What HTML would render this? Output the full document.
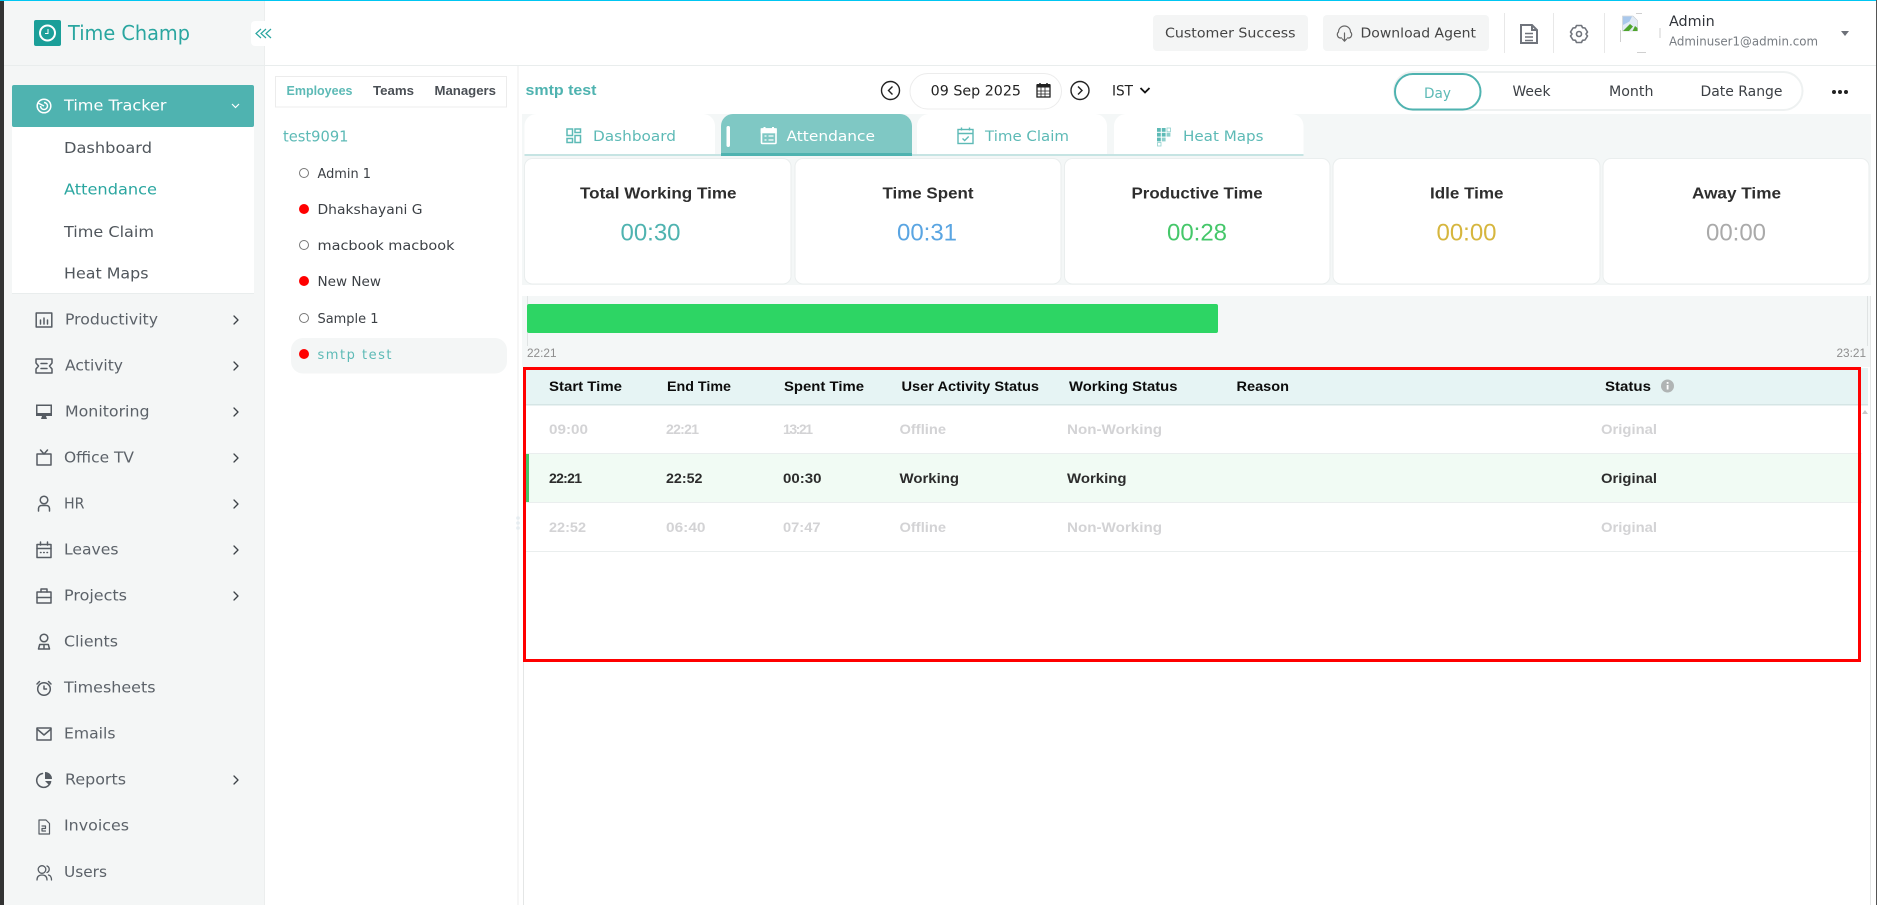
<!DOCTYPE html>
<html lang="en">
<head>
<meta charset="utf-8">
<title>Time Champ - Attendance</title>
<style>
html,body{margin:0;padding:0;background:#fff;width:1877px;height:905px;overflow:hidden}
svg{display:block}
text{font-family:"DejaVu Sans","Liberation Sans",sans-serif;font-size:14px;fill:#333}
.b{font-family:"Liberation Sans",sans-serif;font-weight:700}
.nav{font-size:15px;fill:#5c6269}
.sub{font-size:15px;fill:#50565c}
.emp{font-size:13px;fill:#3c4045}
.tb{font-size:13px;fill:#444}
.tab{font-size:14px;fill:#5dbab6}
.ttl{font-size:16px;fill:#2e2e2e}
.val{font-family:"Liberation Sans",sans-serif;font-size:24px;text-anchor:middle}
.th{font-size:13.5px;fill:#0c0c0c}
.td{font-size:13.5px;fill:#2c2c2c}
.off{font-size:13.5px;fill:#d3d3d5}
.ic{fill:none;stroke:#565c63;stroke-width:1.5;stroke-linecap:round;stroke-linejoin:round}
.ch{fill:none;stroke:#3d4248;stroke-width:1.3;stroke-linecap:round;stroke-linejoin:round}
</style>
</head>
<body>
<svg width="1877" height="905" viewBox="0 0 1877 905" xmlns="http://www.w3.org/2000/svg">
<rect width="1877" height="905" fill="#fff"/>

<!-- sidebar -->
<rect x="4" y="1" width="260" height="904" fill="#f4f6f6"/>
<rect x="264" y="1" width="1" height="904" fill="#eceeee"/>
<rect x="0" y="0" width="4" height="905" fill="#333"/>
<rect x="0" y="0" width="1877" height="1" fill="#00c6f2"/>
<rect x="1876" y="0" width="1" height="905" fill="#555"/>
<rect x="4" y="65" width="1872" height="1" fill="#e9eded"/>

<!-- logo -->
<rect x="34" y="20" width="27" height="26" rx="2" fill="#1b9f99"/>
<circle cx="47.500" cy="33" r="7.500" fill="none" stroke="#fff" stroke-width="2"/>
<path d="M48 29v4.500h-3" fill="none" stroke="#fff" stroke-width="1"/>
<text x="68" y="40" style="font-size:20px;fill:#2aa6a0" textLength="122" lengthAdjust="spacingAndGlyphs">Time Champ</text>

<!-- collapse -->
<rect x="251" y="21" width="25" height="25" rx="4" fill="#fff"/>
<path d="M261 29l-5 4.500 5 4.500M266 29l-5 4.500 5 4.500M271 29l-5 4.500 5 4.500" fill="none" stroke="#2aa6a0" stroke-width="1.200"/>

<!-- active nav -->
<rect x="12" y="85" width="242" height="42" rx="2" fill="#4fb3b0"/>
<g transform="translate(44,106)" fill="none" stroke="#fff" stroke-width="1.500">
<circle r="6.800"/><path d="M-3.500 0a3.500 3.500 0 1 0 3.500-3.500M-6-3l6 3"/>
</g>
<text x="64" y="110.500" style="font-size:15.500px;fill:#fff" textLength="102.500" lengthAdjust="spacingAndGlyphs">Time Tracker</text>
<path d="M232 104l3.500 3.500 3.500-3.500" fill="none" stroke="#fff" stroke-width="1.200"/>
<rect x="12" y="127" width="242" height="167" fill="#fff"/>
<rect x="12" y="293" width="242" height="1" fill="#e9eded"/>
<text class="sub" x="64" y="153" textLength="88" lengthAdjust="spacingAndGlyphs">Dashboard</text>
<text class="sub" x="64" y="194.500" style="fill:#2aa6a0" textLength="93" lengthAdjust="spacingAndGlyphs">Attendance</text>
<text class="sub" x="64" y="237" textLength="90" lengthAdjust="spacingAndGlyphs">Time Claim</text>
<text class="sub" x="64" y="278.500" textLength="84.500" lengthAdjust="spacingAndGlyphs">Heat Maps</text>

<!-- nav items -->
<g transform="translate(44,320)" class="ic"><rect x="-7.800" y="-7" width="15.600" height="14"/><path d="M-3.500 4V0M0 4v-6M3.500 4v-4"/></g>
<text class="nav" x="65" y="324.500" textLength="93" lengthAdjust="spacingAndGlyphs">Productivity</text>
<path class="ch" d="M234 316l4 4-4 4"/>

<g transform="translate(44,366)" class="ic"><path d="M-8-7h16v4l-2.500 3 2.500 3v4h-16v-4l2.500-3-2.500-3zM-3-2.500h6M-3 2.500h6"/></g>
<text class="nav" x="65" y="370.500" textLength="58" lengthAdjust="spacingAndGlyphs">Activity</text>
<path class="ch" d="M234 362l4 4-4 4"/>

<g transform="translate(44,412)"><rect x="-8" y="-7.500" width="16" height="11.500" fill="#565c63"/><rect x="-6.500" y="-6" width="13" height="7" fill="#f4f6f6"/><path d="M-2 4h4l1 3h-6z" fill="#565c63"/><rect x="-8" y="1" width="16" height="3" fill="#565c63"/></g>
<text class="nav" x="65" y="416.500" textLength="84.500" lengthAdjust="spacingAndGlyphs">Monitoring</text>
<path class="ch" d="M234 408l4 4-4 4"/>

<g transform="translate(44,458)" class="ic"><rect x="-7" y="-4" width="14" height="11"/><path d="M-3.500-8L0-4l3.500-4"/></g>
<text class="nav" x="64" y="462.500" textLength="70" lengthAdjust="spacingAndGlyphs">Office TV</text>
<path class="ch" d="M234 454l4 4-4 4"/>

<g transform="translate(44,504)" class="ic"><circle cy="-4" r="3.800"/><path d="M-5.500 7v-2.500a3 3 0 0 1 3-3h5a3 3 0 0 1 3 3V7"/></g>
<text class="nav" x="64" y="508.500" textLength="20.500" lengthAdjust="spacingAndGlyphs">HR</text>
<path class="ch" d="M234 500l4 4-4 4"/>

<g transform="translate(44,550)" class="ic"><rect x="-7" y="-5.500" width="14" height="13"/><path d="M-7-1.500H7M-3.500-8v3M3.500-8v3M-3.500 2.500h.5M-.3 2.500h.5M3 2.500h.5"/></g>
<text class="nav" x="64" y="554.500" textLength="54.500" lengthAdjust="spacingAndGlyphs">Leaves</text>
<path class="ch" d="M234 592l4 4-4 4"/>
<path class="ch" d="M234 546l4 4-4 4"/>

<g transform="translate(44,596)" class="ic"><rect x="-7" y="-4" width="14" height="11"/><path d="M-3-4v-3h6v3M-7 1.500H7M-1 1.500h2"/></g>
<text class="nav" x="64" y="600.500" textLength="63" lengthAdjust="spacingAndGlyphs">Projects</text>

<g transform="translate(44,642)" class="ic"><circle cy="-4" r="3.800"/><path d="M-5.500 7l1.200-4.500h8.600L5.500 7zM0 2.500V7"/></g>
<text class="nav" x="64" y="646.500" textLength="54" lengthAdjust="spacingAndGlyphs">Clients</text>

<g transform="translate(44,688)" class="ic"><circle cy="1" r="6.300"/><path d="M0-2v3h2.500M-7-4l2.500-2.500M7-4L4.500-6.500"/></g>
<text class="nav" x="64" y="692.500" textLength="91.500" lengthAdjust="spacingAndGlyphs">Timesheets</text>

<g transform="translate(44,734)" class="ic"><rect x="-7" y="-6" width="14" height="12"/><path d="M-7-5L0 1l7-6"/></g>
<text class="nav" x="64" y="738.500" textLength="51.500" lengthAdjust="spacingAndGlyphs">Emails</text>

<g transform="translate(44,780)"><path d="M-1.500-6.500A7 7 0 1 0 6.500 2" class="ic"/><path d="M1-8a7 7 0 0 1 7 7H1z" fill="#565c63"/><path d="M1 1h6.500L5 5z" fill="#565c63"/></g>
<text class="nav" x="65" y="784.500" textLength="61" lengthAdjust="spacingAndGlyphs">Reports</text>
<path class="ch" d="M234 776l4 4-4 4"/>

<g transform="translate(44,827)" class="ic" style="stroke-width:1.200"><path d="M-5-7h7l3.500 3.500V7h-10.500zM-2-1h3.500v2.500H-2V4h3.500"/></g>
<text class="nav" x="64" y="830.500" textLength="65" lengthAdjust="spacingAndGlyphs">Invoices</text>

<g transform="translate(44,873)" class="ic" style="stroke-width:1.300"><circle cx="-2" cy="-3.500" r="3.800"/><path d="M-7 7c0-3 1.500-5 5-5s5 2 5 5M3-7a3.500 3.500 0 0 1 0 6.500M4.500 2C6.500 2.500 7.500 4.500 7.500 7"/></g>
<text class="nav" x="64" y="877" textLength="43" lengthAdjust="spacingAndGlyphs">Users</text>

<!-- employee panel -->
<rect x="517.500" y="66" width="1" height="839" fill="#eceeee"/>
<rect x="275.500" y="76.500" width="231" height="30.500" fill="#fff" stroke="#ececec"/>
<text class="b" x="286.500" y="95" style="font-size:13px;fill:#5dbab6" textLength="66" lengthAdjust="spacingAndGlyphs">Employees</text>
<text class="b" x="373" y="95" style="font-size:13px;fill:#4a4f55" textLength="41" lengthAdjust="spacingAndGlyphs">Teams</text>
<text class="b" x="434.500" y="95" style="font-size:13px;fill:#4a4f55" textLength="61.500" lengthAdjust="spacingAndGlyphs">Managers</text>
<text x="283" y="141.500" style="font-size:15px;fill:#5dbab6" textLength="65.500" lengthAdjust="spacingAndGlyphs">test9091</text>

<rect x="291" y="338" width="216" height="35.500" rx="12" fill="#f4f6f6"/>
<circle cx="304" cy="173" r="4.500" fill="#fff" stroke="#777"/>
<text class="emp" x="317.500" y="178" textLength="53.500" lengthAdjust="spacingAndGlyphs">Admin 1</text>
<circle cx="304" cy="209" r="5" fill="#f00"/>
<text class="emp" x="317.500" y="214" textLength="105" lengthAdjust="spacingAndGlyphs">Dhakshayani G</text>
<circle cx="304" cy="245" r="4.500" fill="#fff" stroke="#777"/>
<text class="emp" x="317.500" y="250" textLength="137" lengthAdjust="spacingAndGlyphs">macbook macbook</text>
<circle cx="304" cy="281" r="5" fill="#f00"/>
<text class="emp" x="317.500" y="286" textLength="63.500" lengthAdjust="spacingAndGlyphs">New New</text>
<circle cx="304" cy="318" r="4.500" fill="#fff" stroke="#777"/>
<text class="emp" x="317.500" y="323" textLength="61" lengthAdjust="spacingAndGlyphs">Sample 1</text>
<circle cx="304" cy="354" r="5" fill="#f00"/>
<text class="emp" x="317.500" y="359" style="fill:#5dbab6" textLength="74" lengthAdjust="spacing">smtp test</text>
<g fill="#e6ecf0"><circle cx="518" cy="518" r="1.800"/><circle cx="518" cy="523" r="1.800"/><circle cx="518" cy="528" r="1.800"/></g>

<!-- top bar -->
<rect x="1153" y="15" width="155" height="36" rx="4" fill="#f4f5f5"/>
<text class="tb" x="1165" y="37.500" textLength="130.500" lengthAdjust="spacingAndGlyphs">Customer Success</text>
<rect x="1323" y="15" width="166" height="36" rx="4" fill="#f4f5f5"/>
<g transform="translate(1344.500,33)" fill="none" stroke="#666" stroke-width="1.200" stroke-linecap="round" stroke-linejoin="round"><path d="M-3 5h-1.500A3.500 3.500 0 0 1-6 -1a6 6 0 0 1 12 0A3.500 3.500 0 0 1 4.500 5H3M0 0v8M-2 6l2 2.200L2 6"/></g>
<text class="tb" x="1360.500" y="37.500" textLength="115.500" lengthAdjust="spacingAndGlyphs">Download Agent</text>
<rect x="1504" y="13" width="1" height="40" fill="#e8e8e8"/>
<rect x="1553" y="13" width="1" height="40" fill="#e8e8e8"/>
<rect x="1604" y="13" width="1" height="40" fill="#e8e8e8"/>
<g fill="none" stroke="#70747c" stroke-width="2"><path d="M1521 25h11l5 5v13h-16zM1532 25v5h5"/><path d="M1525 33.500h8M1525 37h8M1525 40.500h8" stroke-width="1.600"/></g>
<g transform="translate(1579,34)" fill="none" stroke="#70747c" stroke-width="1.600" stroke-linejoin="round"><path d="M-2.500-8.500h5l1 2.200 2.500.3 2.500 4-1.500 2 1.500 2-2.500 4-2.500.3-1 2.200h-5l-1-2.200-2.500-.3-2.500-4 1.500-2-1.500-2 2.500-4 2.500-.3z"/><circle r="2.500"/></g>

<!-- avatar -->
<g fill="none" stroke="#d0d0d0"><path d="M1636 13.500h6"/><path d="M1660 28v10"/><path d="M1637 52.500h9"/><path d="M1620.500 30v12"/></g>
<path d="M1622.500 16h10.500l4.500 4.500V31h-15z" fill="#e2ebf6" stroke="#c4c8cc" stroke-width=".6"/>
<path d="M1623 16.500h9l-2.500 5-6.500 3.500z" fill="#a9c8ec"/>
<path d="M1623 31l7-7 3 2.500L1629 31z" fill="#4fa52d"/>
<path d="M1635 26l2.500 2v3h-5z" fill="#4fa52d"/>
<text x="1669" y="26" style="font-size:14px;fill:#30343a" textLength="45.700" lengthAdjust="spacingAndGlyphs">Admin</text>
<text x="1669" y="45.500" style="font-size:12.500px;fill:#777c82" textLength="149" lengthAdjust="spacingAndGlyphs">Adminuser1@admin.com</text>
<path d="M1841 31h8l-4 5z" fill="#6d7178"/>

<!-- context row -->
<text class="b" x="525.500" y="95" style="font-size:14.500px;fill:#4fb3b0" textLength="71" lengthAdjust="spacingAndGlyphs">smtp test</text>
<circle cx="890.500" cy="90.500" r="9" fill="#fff" stroke="#222" stroke-width="1.400"/>
<path d="M892.500 86.500l-4 4 4 4" fill="none" stroke="#222" stroke-width="1.400"/>
<rect x="910" y="73.500" width="151.500" height="35.500" rx="17.700" fill="#fff" stroke="#ececec"/>
<text x="930.700" y="95.500" style="font-size:14px;fill:#222" textLength="90.300" lengthAdjust="spacingAndGlyphs">09 Sep 2025</text>
<g><rect x="1037" y="85" width="13" height="12" fill="#fff" stroke="#222" stroke-width="1.300"/><rect x="1037" y="84" width="13" height="3.500" fill="#222"/><path d="M1040 83v3M1047 83v3" stroke="#222" stroke-width="1.500"/><path d="M1037 91h13M1037 94h13M1041 87v10M1045 87v10" stroke="#222" stroke-width=".8"/></g>
<circle cx="1080" cy="90.500" r="9" fill="#fff" stroke="#222" stroke-width="1.400"/>
<path d="M1078 86.500l4 4-4 4" fill="none" stroke="#222" stroke-width="1.400"/>
<text x="1112" y="95.500" style="font-size:14px;fill:#222" textLength="21" lengthAdjust="spacingAndGlyphs">IST</text>
<path d="M1140.500 88l4.500 4.500 4.500-4.500" fill="none" stroke="#111" stroke-width="1.800"/>

<!-- range toggle -->
<rect x="1394" y="72" width="408.500" height="38" rx="19" fill="#fff" stroke="#eef1f1" stroke-width="2"/>
<rect x="1395" y="74" width="85.500" height="35.500" rx="17.700" fill="#fff" stroke="#4fb3b0" stroke-width="2"/>
<text x="1424" y="98" style="font-size:14px;fill:#5dbab6" textLength="27" lengthAdjust="spacingAndGlyphs">Day</text>
<text x="1512.500" y="96" style="font-size:14px;fill:#3c4045" textLength="38" lengthAdjust="spacingAndGlyphs">Week</text>
<text x="1609" y="96" style="font-size:14px;fill:#3c4045" textLength="44.500" lengthAdjust="spacingAndGlyphs">Month</text>
<text x="1700.500" y="96" style="font-size:14px;fill:#3c4045" textLength="82" lengthAdjust="spacingAndGlyphs">Date Range</text>
<g fill="#222"><circle cx="1834" cy="92" r="2"/><circle cx="1840" cy="92" r="2"/><circle cx="1846" cy="92" r="2"/></g>

<!-- tab band -->
<rect x="522" y="114" width="1349" height="171" fill="#f4f7f7"/>
<path d="M524.500 155v-29a12 12 0 0 1 12-12H703a12 12 0 0 1 12 12v29z" fill="#fff"/>
<path d="M917 155v-29a12 12 0 0 1 12-12h166a12 12 0 0 1 12 12v29z" fill="#fff"/>
<path d="M1114 155v-29a12 12 0 0 1 12-12h165.500a12 12 0 0 1 12 12v29z" fill="#fff"/>
<rect x="524.500" y="154" width="197" height="2" fill="#c6e4e3"/>
<rect x="912" y="154" width="391.500" height="2" fill="#c6e4e3"/>
<path d="M721 156v-30a12 12 0 0 1 12-12h167a12 12 0 0 1 12 12v30z" fill="#7fc8c4"/>
<rect x="721" y="153" width="191" height="3" fill="#4fb3b0"/>
<rect x="726.500" y="126" width="3.500" height="21" rx="1.700" fill="#fff"/>

<g fill="none" stroke="#5dbab6" stroke-width="1.500"><rect x="567" y="129" width="5.500" height="6.500"/><rect x="575" y="129" width="5.500" height="3.500"/><rect x="567" y="138.500" width="5.500" height="4"/><rect x="575" y="135.500" width="5.500" height="7"/></g>
<text class="tab" x="593" y="141" textLength="83" lengthAdjust="spacingAndGlyphs">Dashboard</text>

<g fill="none" stroke="#fff" stroke-width="1.600"><rect x="761.500" y="129" width="14.500" height="14.500" rx="1"/><path d="M764.500 127v3M773 127v3" stroke-width="2"/><rect x="761.500" y="129" width="14.500" height="3.500" fill="#fff"/><path d="M764.500 136h2M768.500 136h5M764.500 140h2M768.500 140h5" stroke-width="1.300"/></g>
<text class="tab" x="786.500" y="141" style="fill:#fff" textLength="88.500" lengthAdjust="spacingAndGlyphs">Attendance</text>

<g fill="none" stroke="#5dbab6" stroke-width="1.400"><rect x="958" y="129.500" width="15" height="14"/><path d="M958 133.500h15M961.500 127.500v3M969.500 127.500v3M962.500 138.500l2.200 2 4-4"/></g>
<text class="tab" x="985" y="141" textLength="84" lengthAdjust="spacingAndGlyphs">Time Claim</text>

<g fill="#5dbab6"><rect x="1157" y="128" width="3.800" height="3.800"/><rect x="1161.800" y="128" width="3.800" height="3.800"/><rect x="1157" y="132.800" width="3.800" height="3.800"/><rect x="1161.800" y="132.800" width="3.800" height="3.800"/><rect x="1166.600" y="132.800" width="3.800" height="3.800" opacity=".7"/><rect x="1157" y="137.600" width="3.800" height="3.800"/><rect x="1161.800" y="137.600" width="3.800" height="3.800" opacity=".7"/></g>
<g fill="none" stroke="#8fd0cd" stroke-width=".8"><rect x="1167" y="128" width="3.500" height="3.800"/><rect x="1157.500" y="142.500" width="3.500" height="3.500"/></g>
<text class="tab" x="1183" y="141" textLength="80.500" lengthAdjust="spacingAndGlyphs">Heat Maps</text>

<!-- cards -->
<g fill="#fff" stroke="#eaeeee">
<rect x="524.500" y="158.500" width="266.500" height="125.500" rx="8"/>
<rect x="795" y="158.500" width="266" height="125.500" rx="8"/>
<rect x="1064.500" y="158.500" width="265.500" height="125.500" rx="8"/>
<rect x="1333" y="158.500" width="267" height="125.500" rx="8"/>
<rect x="1603" y="158.500" width="266" height="125.500" rx="8"/>
</g>
<text class="b ttl" x="580" y="198.500" textLength="156.500" lengthAdjust="spacingAndGlyphs">Total Working Time</text>
<text class="b ttl" x="882.500" y="198.500" textLength="91" lengthAdjust="spacingAndGlyphs">Time Spent</text>
<text class="b ttl" x="1131.500" y="198.500" textLength="131.200" lengthAdjust="spacingAndGlyphs">Productive Time</text>
<text class="b ttl" x="1430" y="198.500" textLength="73.500" lengthAdjust="spacingAndGlyphs">Idle Time</text>
<text class="b ttl" x="1692" y="198.500" textLength="89" lengthAdjust="spacingAndGlyphs">Away Time</text>
<text class="val" x="650.500" y="240.500" style="fill:#4fb3b0">00:30</text>
<text class="val" x="927" y="240.500" style="fill:#5aa5e2">00:31</text>
<text class="val" x="1197" y="240.500" style="fill:#45c76a">00:28</text>
<text class="val" x="1466.500" y="240.500" style="fill:#d6b63e">00:00</text>
<text class="val" x="1736" y="240.500" style="fill:#aaaaaa">00:00</text>

<!-- timeline -->
<rect x="522" y="296" width="1349" height="71" fill="#f4f7f7"/>
<rect x="527" y="296" width="1" height="50" fill="#dfe3e3"/>
<rect x="1867" y="296" width="1" height="50" fill="#dfe3e3"/>
<rect x="527" y="304" width="691" height="29" rx="2" fill="#2dd564"/>
<text x="527" y="357" style="font-family:'Liberation Sans',sans-serif;font-size:12px;fill:#8e8e8e" textLength="29.500" lengthAdjust="spacingAndGlyphs">22:21</text>
<text x="1836.500" y="357" style="font-family:'Liberation Sans',sans-serif;font-size:12px;fill:#8e8e8e" textLength="29.500" lengthAdjust="spacingAndGlyphs">23:21</text>

<!-- table -->
<rect x="523" y="367" width="1" height="538" fill="#e4e6e6"/>
<rect x="1870" y="296" width="1" height="609" fill="#e4e6e6"/>
<rect x="524" y="368" width="1344" height="36" fill="#e6f4f4"/>
<rect x="524" y="404" width="1344" height="1.500" fill="#d5e5e5"/>
<rect x="524" y="454" width="1338" height="48" fill="#f1fbf4"/>
<rect x="526" y="454" width="3" height="48" fill="#45c76a"/>
<rect x="524" y="453" width="1338" height="1" fill="#eaeeee"/>
<rect x="524" y="502" width="1338" height="1" fill="#eaeeee"/>
<rect x="524" y="551" width="1338" height="1" fill="#eaeeee"/>
<path d="M1862 414h6l-3-4z" fill="#c9c9c9"/>

<text class="b th" x="549" y="391" textLength="73" lengthAdjust="spacingAndGlyphs">Start Time</text>
<text class="b th" x="667" y="391" textLength="64" lengthAdjust="spacingAndGlyphs">End Time</text>
<text class="b th" x="784" y="391" textLength="80" lengthAdjust="spacingAndGlyphs">Spent Time</text>
<text class="b th" x="901.500" y="391" textLength="137.500" lengthAdjust="spacingAndGlyphs">User Activity Status</text>
<text class="b th" x="1069" y="391" textLength="108.500" lengthAdjust="spacingAndGlyphs">Working Status</text>
<text class="b th" x="1236.500" y="391" textLength="52.500" lengthAdjust="spacingAndGlyphs">Reason</text>
<text class="b th" x="1605" y="391" textLength="46" lengthAdjust="spacingAndGlyphs">Status</text>
<circle cx="1667.500" cy="386" r="6.500" fill="#b0b4b4"/>
<rect x="1666.700" y="385" width="1.800" height="4.500" fill="#fff"/><rect x="1666.700" y="382" width="1.800" height="1.800" fill="#fff"/>

<text class="b off" x="549" y="434" textLength="39" lengthAdjust="spacingAndGlyphs">09:00</text>
<text class="b off" x="666" y="434" style="font-size:14px" textLength="33" lengthAdjust="spacing">22:21</text>
<text class="b off" x="783" y="434" style="font-size:14px" textLength="30" lengthAdjust="spacing">13:21</text>
<text class="b off" x="899.500" y="434" textLength="46.500" lengthAdjust="spacingAndGlyphs">Offline</text>
<text class="b off" x="1067" y="434" textLength="95" lengthAdjust="spacingAndGlyphs">Non-Working</text>
<text class="b off" x="1601" y="434" textLength="56" lengthAdjust="spacingAndGlyphs">Original</text>

<text class="b td" x="549" y="483" style="font-size:14px" textLength="33" lengthAdjust="spacing">22:21</text>
<text class="b td" x="666" y="483" textLength="36.500" lengthAdjust="spacingAndGlyphs">22:52</text>
<text class="b td" x="783" y="483" textLength="38.500" lengthAdjust="spacingAndGlyphs">00:30</text>
<text class="b td" x="899.500" y="483" textLength="59.500" lengthAdjust="spacingAndGlyphs">Working</text>
<text class="b td" x="1067" y="483" textLength="59.500" lengthAdjust="spacingAndGlyphs">Working</text>
<text class="b td" x="1601" y="483" textLength="56" lengthAdjust="spacingAndGlyphs">Original</text>

<text class="b off" x="549" y="532" textLength="37" lengthAdjust="spacingAndGlyphs">22:52</text>
<text class="b off" x="666" y="532" textLength="39.500" lengthAdjust="spacingAndGlyphs">06:40</text>
<text class="b off" x="783" y="532" textLength="37.500" lengthAdjust="spacingAndGlyphs">07:47</text>
<text class="b off" x="899.500" y="532" textLength="46.500" lengthAdjust="spacingAndGlyphs">Offline</text>
<text class="b off" x="1067" y="532" textLength="95" lengthAdjust="spacingAndGlyphs">Non-Working</text>
<text class="b off" x="1601" y="532" textLength="56" lengthAdjust="spacingAndGlyphs">Original</text>

<!-- annotation box -->
<rect x="524.500" y="368.500" width="1335" height="292" fill="none" stroke="#ff0000" stroke-width="3"/>
</svg>
</body>
</html>
